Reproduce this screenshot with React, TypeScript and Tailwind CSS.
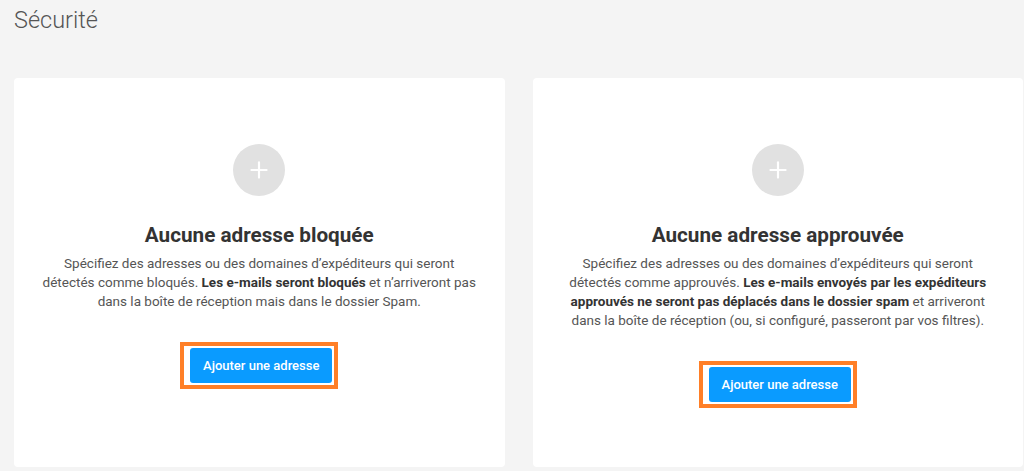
import { Plus } from 'lucide-react'

type Card = {
  title: string
  body: React.ReactNode
}

const cards: Card[] = [
  {
    title: 'Aucune adresse bloquée',
    body: (
      <>
        Spécifiez des adresses ou des domaines d’expéditeurs qui seront
        <br />
        détectés comme bloqués. <strong className="font-bold text-[#333]">Les e-mails seront bloqués</strong> et n’arriveront pas
        <br />
        dans la boîte de réception mais dans le dossier Spam.
      </>
    ),
  },
  {
    title: 'Aucune adresse approuvée',
    body: (
      <>
        Spécifiez des adresses ou des domaines d’expéditeurs qui seront
        <br />
        détectés comme approuvés. <strong className="font-bold text-[#333]">Les e-mails envoyés par les expéditeurs</strong>
        <br />
        <strong className="font-bold text-[#333]">approuvés ne seront pas déplacés dans le dossier spam</strong> et arriveront
        <br />
        dans la boîte de réception (ou, si configuré, passeront par vos filtres).
      </>
    ),
  },
]

function EmptyCard({ card }: { card: Card }) {
  return (
    <div className="flex-1 bg-white rounded-[4px] flex flex-col items-center pt-[66px] px-[20px]">
      <div className="w-[52px] h-[52px] rounded-full bg-[#e1e1e1] flex items-center justify-center">
        <Plus className="w-[26px] h-[26px] text-white" strokeWidth={2} />
      </div>
      <h2 className="mt-[25px] text-[20.7px] leading-[28px] font-bold text-[#333]">{card.title}</h2>
      <p className="mt-[5px] whitespace-nowrap text-center text-[13.5px] leading-[19px] text-[#555]">{card.body}</p>
      <div className="mt-[31px] border-4 border-[#ff7f27] pl-[6px] pr-[2px] py-[2px]">
        <button className="h-[35px] px-[13px] rounded-[3px] bg-[#0a9bff] text-white text-[13px] font-medium">
          Ajouter une adresse
        </button>
      </div>
    </div>
  )
}

export default function App() {
  return (
    <main className="w-full h-[471px] bg-[#f4f4f4] pl-[14px] pr-px pb-[4px] flex flex-col font-['Roboto',sans-serif]">
      <h1 className="pt-[5px] text-[23.5px] leading-[30px] font-light text-[#555]">Sécurité</h1>
      <section className="flex-1 mt-[43px] flex gap-[28px]">
        {cards.map((c) => (
          <EmptyCard key={c.title} card={c} />
        ))}
      </section>
    </main>
  )
}
